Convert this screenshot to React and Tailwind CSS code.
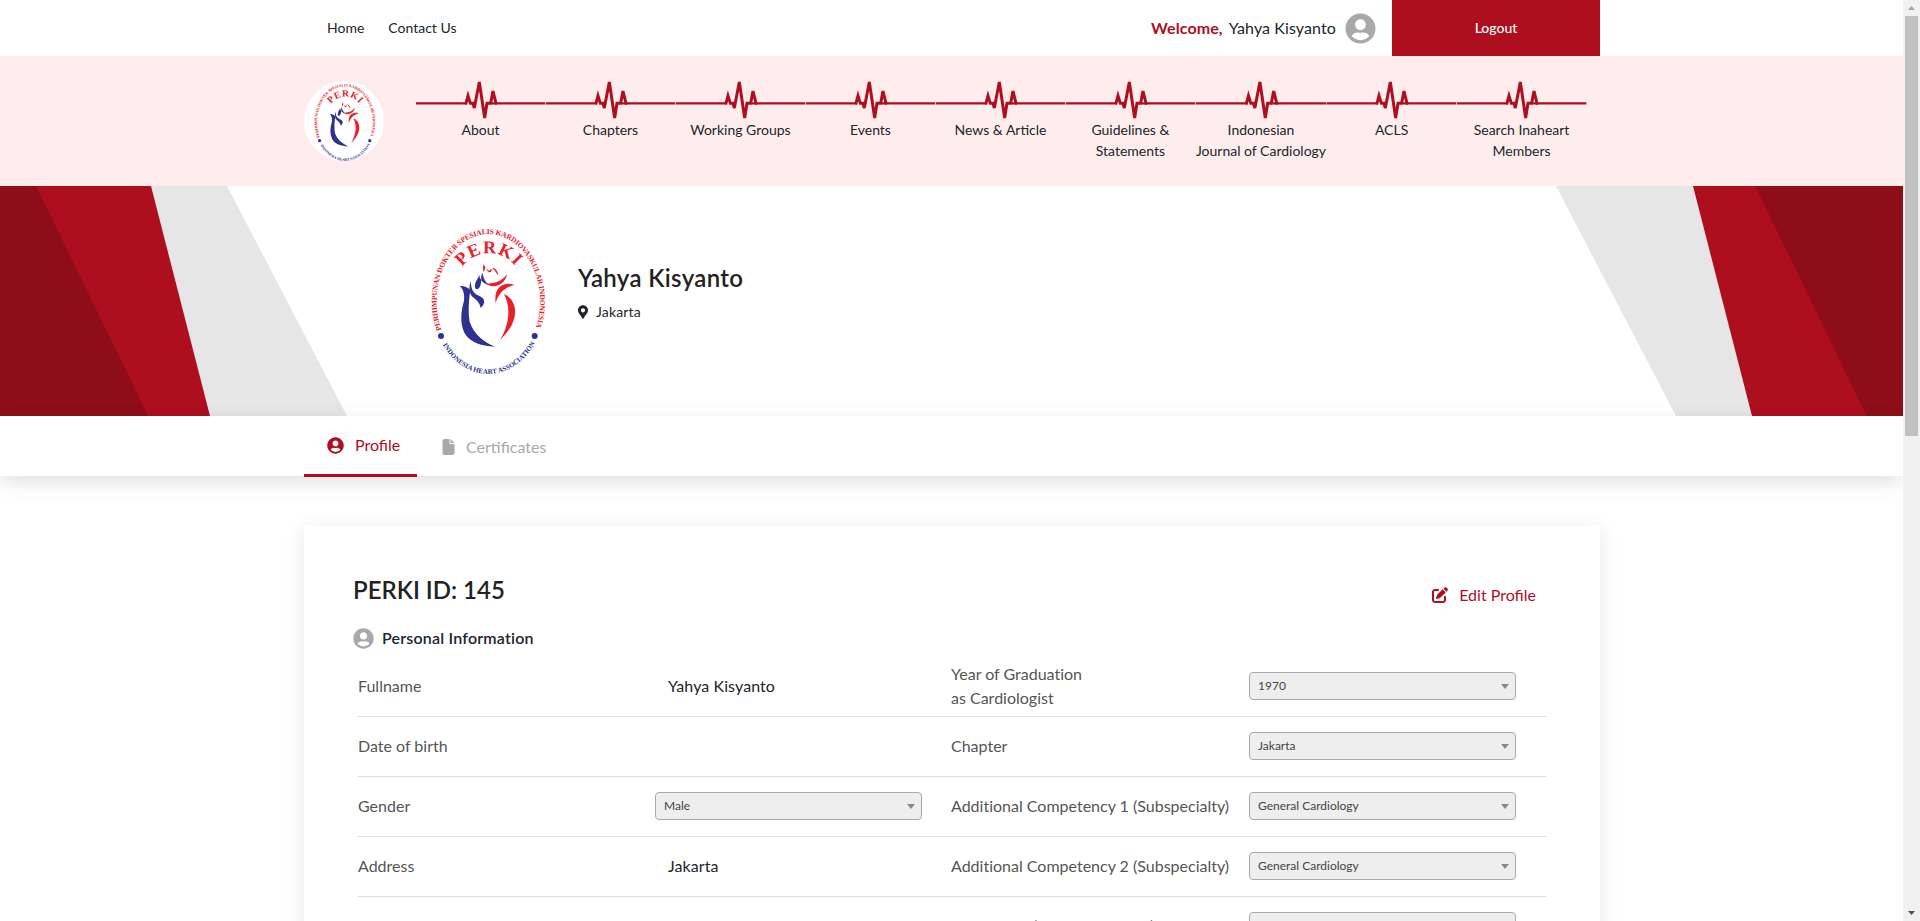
import React from 'react';
import { FaUserCircle, FaMapMarkerAlt } from 'react-icons/fa';
import { FaFile, FaPenToSquare } from 'react-icons/fa6';

const NAV = [
  ['About'],
  ['Chapters'],
  ['Working Groups'],
  ['Events'],
  ['News & Article'],
  ['Guidelines &', 'Statements'],
  ['Indonesian', 'Journal of Cardiology'],
  ['ACLS'],
  ['Search Inaheart', 'Members'],
];

const ROWS = [
  { label: 'Fullname', value: 'Yahya Kisyanto', label2: ['Year of Graduation', 'as Cardiologist'], select2: '1970' },
  { label: 'Date of birth', label2: ['Chapter'], select2: 'Jakarta' },
  { label: 'Gender', select: 'Male', label2: ['Additional Competency 1 (Subspecialty)'], select2: 'General Cardiology' },
  { label: 'Address', value: 'Jakarta', label2: ['Additional Competency 2 (Subspecialty)'], select2: 'General Cardiology' },
  { label: '', label2: ['Experience (years in practice)'], select2: '' },
];

function PerkiLogo({ className, id }) {
  const top = `${id}-top`;
  const bottom = `${id}-bottom`;
  const name = `${id}-name`;
  return (
    <svg className={className} viewBox="0 0 375 468" preserveAspectRatio="none" fontFamily="'Liberation Serif', serif" fontWeight="700">
      <defs>
        <path id={top} d="M50 325A155 202 0 1 1 330 325" />
        <path id={bottom} d="M50 363A171 218 0 0 0 330 363" />
        <path id={name} d="M109 138A100 100 0 0 1 275 138" />
      </defs>
      <text fontSize="22.5" fill="#e8202a">
        <textPath href={`#${top}`} startOffset="2" textLength="728">PERHIMPUNAN DOKTER SPESIALIS KARDIOVASKULAR INDONESIA</textPath>
      </text>
      <text fontSize="21" fill="#2e3192">
        <textPath href={`#${bottom}`} startOffset="6" textLength="346">INDONESIA HEART ASSOCIATION</textPath>
      </text>
      <text fontSize="54" fill="#e8202a">
        <textPath href={`#${name}`} startOffset="4" textLength="184">PERKI</textPath>
      </text>
      <circle cx="48" cy="342" r="9" fill="#2e3192" />
      <circle cx="329" cy="342" r="9" fill="#2e3192" />
      <g transform="translate(-45 -36)">
        <g fill="#2e3192">
          <path d="M150 228Q168 227 181 240C176 275 174 305 179 335C192 375 225 398 255 410C212 408 178 396 163 368C149 335 153 305 162 272Q166 245 150 228Z" />
          <path d="M183 214C182 240 192 252 210 259C224 265 228 280 212 294C210 280 200 270 189 262C176 250 176 230 183 214Z" />
          <path d="M208 194C204 208 196 212 195 226C194 234 197 240 203 237C214 232 211 220 215 211C210 206 208 200 208 194Z" />
          <path d="M217 191C212 205 213 217 233 223C225 215 219 205 217 191Z" stroke="#2e3192" strokeWidth="2" />
        </g>
        <g fill="#e8202a">
          <path d="M228 220C252 222 276 214 291 193C288 215 265 233 243 228Q234 226 228 220Z" />
          <path d="M313 224C280 214 250 232 257 279C264 255 278 234 313 224Z" />
          <path d="M282 252C302 290 300 340 270 390C300 362 318 330 315 298C312 275 300 260 282 252Z" />
          <path d="M221 160C218 172 218 180 222 187C223 177 228 172 226 170C222 168 221 165 221 160Z" />
          <path d="M230 178Q236 188 244 178L243 185Q236 190 230 178Z" stroke="#e8202a" strokeWidth="2" />
          <path d="M248 174C256 176 262 182 263 194C258 184 254 180 248 174Z" stroke="#e8202a" strokeWidth="2" />
        </g>
      </g>
    </svg>
  );
}

function Pulse() {
  return (
    <svg className="block h-10 w-full" viewBox="0 0 390 120" preserveAspectRatio="none" fill="none" stroke="#ae0f1f">
      <path strokeWidth="7" d="M0 70H152M228 70H388" />
      <path strokeWidth="9" d="M148 70H150L156 47L163 70H171L175 84L190 6L206 114L213 70H224L231 33L240 70H243" />
    </svg>
  );
}

function Select({ children }) {
  return (
    <div className="flex h-7 w-[267px] items-center justify-between rounded-[4px] border border-[#aaa] bg-[#eee] pl-2 pr-[6px] text-xs text-[#444]">
      <span>{children}</span>
      <svg className="h-[5px] w-2" viewBox="0 0 8 5" fill="#888"><path d="M0 0H8L4 5Z" /></svg>
    </div>
  );
}

export default function App() {
  return (
    <div className="flex h-[921px] w-[1920px] overflow-hidden bg-white text-[#212529]" style={{ fontFamily: "Lato, 'Liberation Sans', sans-serif" }}>
      <div className="flex h-full w-[1903px] flex-col overflow-hidden">
        <header className="h-14 shrink-0 pl-[304px] pr-[303px]">
          <div className="flex h-full items-center justify-between">
            <nav className="flex gap-6 pl-[23px] text-sm">
              <a>Home</a>
              <a>Contact Us</a>
            </nav>
            <div className="flex h-full items-center">
              <span className="text-base font-bold tracking-[0.1px] text-[#ae0f1f]">Welcome,</span>
              <span className="ml-[6px] text-base tracking-[0.1px]">Yahya Kisyanto</span>
              <FaUserCircle className="ml-[9px] h-[31px] w-[31px] text-[#a9a9a9]" />
              <button className="ml-4 h-full w-52 bg-[#ae0f1f] text-sm font-medium text-white">Logout</button>
            </div>
          </div>
        </header>

        <div className="flex h-[130px] shrink-0 bg-[#ffedee] pl-[304px]">
          <div className="mt-[25px] flex h-20 w-20 items-center justify-center rounded-full bg-white">
            <PerkiLogo id="nav-logo" className="h-[83px] w-[67px] shrink-0" />
          </div>
          <nav className="ml-8 mt-6 flex w-[1171px]">
            {NAV.map((lines) => (
              <a key={lines[0]} className="flex flex-1 basis-0 flex-col whitespace-nowrap text-sm leading-[21px]">
                <Pulse />
                <span className="-mt-px flex flex-col items-center pr-px">
                  {lines.map((l) => <span key={l}>{l}</span>)}
                </span>
              </a>
            ))}
          </nav>
        </div>

        <section className="relative h-[230px] shrink-0">
          <svg className="absolute inset-0 h-full w-full" viewBox="0 0 1903 230">
            <path fill="#e6e6e6" d="M0 0H227L347 230H0ZM1556 0H1903V230H1676Z" />
            <path fill="#ae0f1f" d="M0 0H151L210 230H0ZM1693 0H1903V230H1752Z" />
            <path fill="#8f0c19" d="M0 0H36L148 230H0ZM1755 0H1903V230H1867Z" />
          </svg>
          <div className="relative flex pl-[425px] pt-9">
            <PerkiLogo id="hero-logo" className="h-[156px] w-[125px]" />
            <div className="ml-7 pt-[38px]">
              <h1 className="text-2xl font-semibold leading-9 tracking-[0.35px] text-[#222]">Yahya Kisyanto</h1>
              <p className="mt-[3px] flex items-center gap-2 text-sm leading-[25px] tracking-[0.15px]">
                <FaMapMarkerAlt className="h-[14px] w-[10px]" />
                Jakarta
              </p>
            </div>
          </div>
        </section>

        <div className="relative flex h-[60px] shrink-0 bg-white pl-[304px] shadow-[0_6px_20px_rgba(0,0,0,0.12)]">
          <a className="flex h-[61px] w-[113px] items-center border-b-[3px] border-[#ae0f1f] pl-[23px] text-[#ae0f1f]">
            <FaUserCircle className="size-[17px]" />
            <span className="ml-[11px]">Profile</span>
          </a>
          <a className="ml-[25px] flex h-[62px] items-center text-[#a9a9a9]">
            <FaFile className="h-4 w-[13px]" />
            <span className="ml-[11px]">Certificates</span>
          </a>
        </div>

        <main className="ml-[304px] mt-[50px] h-[900px] w-[1296px] shrink-0 bg-white pl-[50px] pr-[54px] pt-[46px] shadow-[0_4px_20px_rgba(0,0,0,0.1)]">
          <div className="flex items-start justify-between pr-[10px]">
            <h2 className="-ml-px text-2xl font-semibold leading-9 text-[#222]">PERKI ID: 145</h2>
            <a className="mt-[11px] flex items-center gap-[11px] text-[#ae0f1f]">
              <FaPenToSquare className="size-4" />
              Edit Profile
            </a>
          </div>
          <div className="mt-[18px] flex h-6 items-center gap-2">
            <FaUserCircle className="-ml-px size-[21px] text-[#a9a9a9]" />
            <h3 className="font-semibold tracking-[0.2px]">Personal Information</h3>
          </div>
          <div className="ml-1 mt-[7px]">
            {ROWS.map((r) => (
              <div key={r.label2[0]} className="flex h-[60px] w-[1188px] items-center border-b border-[#ddd] pb-px text-[#555]">
                <div className="w-[297px]">{r.label}</div>
                <div className="w-[296px]">
                  {r.select ? <Select>{r.select}</Select> : <span className="pl-[13px] tracking-[0.08px] text-[#212529]">{r.value}</span>}
                </div>
                <div className="w-[298px] whitespace-nowrap [font-variant-ligatures:none]">
                  {r.label2.map((l) => <div key={l}>{l}</div>)}
                </div>
                <Select>{r.select2}</Select>
              </div>
            ))}
          </div>
        </main>
      </div>

      <div className="flex h-full w-[17px] flex-col items-center bg-[#f1f1f1]">
        <svg className="mt-[6px] h-1 w-[7px] shrink-0" viewBox="0 0 7 4" fill="#a3a3a3"><path d="M0 4L3.5 0L7 4Z" /></svg>
        <div className="mt-[6px] h-[420px] w-[13px] shrink-0 bg-[#c1c1c1]" />
        <svg className="mb-[6px] mt-auto h-1 w-[7px] shrink-0" viewBox="0 0 7 4" fill="#505050"><path d="M0 0H7L3.5 4Z" /></svg>
      </div>
    </div>
  );
}
